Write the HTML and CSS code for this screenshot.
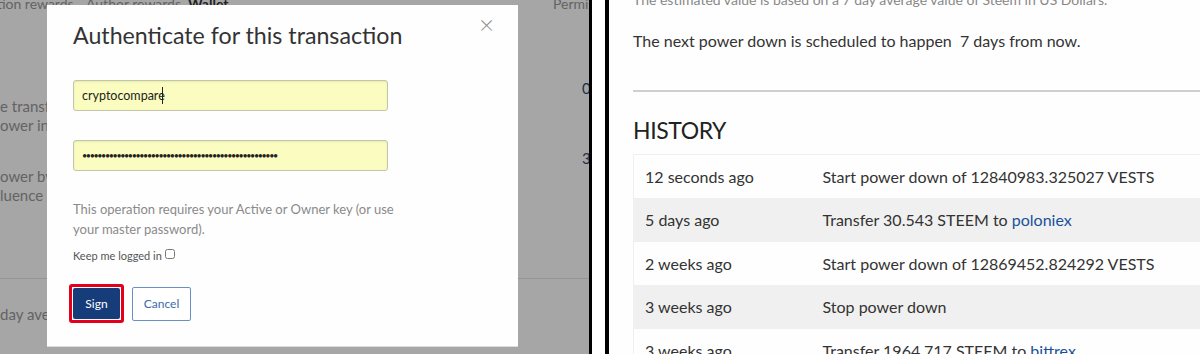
FILE: index.html
```html
<!DOCTYPE html>
<html lang="en">
<head>
    <meta charset="UTF-8">
    <meta name="viewport" content="width=device-width, initial-scale=1.0">
    <title>Wallet - Authenticate</title>
    <link rel="stylesheet" href="styles.css">
</head>
<body>
    <!-- Left shot: wallet page dimmed behind the login modal -->
    <div class="shot left">
        <div class="page">
            <div class="tabs">
                <span class="tab t1">Curation rewards</span>
                <span class="tab t2">Author rewards</span>
                <span class="tab t3 current">Wallet</span>
                <span class="tab">Permissions</span>
            </div>
            <div class="row first">
                <div class="desc">
                    <p>e transferred anywhere at anytime.</p>
                    <p>ower in a process called powering up.</p>
                </div>
                <div class="amount">0.000 STEEM</div>
            </div>
            <div class="row">
                <div class="desc">
                    <p>ower by holding it longer.</p>
                    <p>luence power and voting.</p>
                </div>
                <div class="amount">3.000 STEEM</div>
            </div>
            <div class="sep"></div>
            <p class="note">day average value of Steem in US Dollars.</p>
        </div>
        <div class="overlay"></div>

        <div class="modal">
            <span class="close">&times;</span>
            <h3>Authenticate for this transaction</h3>
            <form id="loginForm">
                <div class="field">
                    <input type="text" class="autofill" value="cryptocompare">
                    <span class="caret"></span>
                </div>
                <div class="field">
                    <input type="password" class="autofill" value="ooooooooooooooooooooooooooooooooooooooooooooooooooo">
                </div>
                <p class="hint">This operation requires your Active or Owner key (or use<br>your master password).</p>
                <label class="keep">Keep me logged in <input type="checkbox"></label>
                <div class="actions">
                    <span class="highlight"><button type="submit" class="btn primary">Sign</button></span>
                    <button type="button" class="btn hollow">Cancel</button>
                </div>
            </form>
        </div>
    </div>

    <div class="divider"><span></span></div>

    <!-- Right shot: history table -->
    <div class="shot right">
        <p class="estimate">The estimated value is based on a 7 day average value of Steem in US Dollars.</p>
        <p class="next">The next power down is scheduled to happen&nbsp; 7 days from now.</p>
        <hr>
        <h4>HISTORY</h4>
        <table class="history">
            <tr><td>12 seconds ago</td><td>Start power down of 12840983.325027 VESTS</td></tr>
            <tr><td>5 days ago</td><td>Transfer 30.543 STEEM to <a href="#">poloniex</a></td></tr>
            <tr><td>2 weeks ago</td><td>Start power down of 12869452.824292 VESTS</td></tr>
            <tr><td>3 weeks ago</td><td>Stop power down</td></tr>
            <tr><td>3 weeks ago</td><td>Transfer 1964.717 STEEM to <a href="#">bittrex</a></td></tr>
        </table>
    </div>
</body>
</html>
```

FILE: styles.css
```css
* { box-sizing: border-box; }
html, body { margin: 0; height: 354px; overflow: hidden; }
body { display: flex; font-family: Lato, "Open Sans", sans-serif; color: #333; background: #000; }

.shot { height: 354px; overflow: hidden; }
.left { width: 589px; flex-shrink: 0; position: relative; background: #fff; }
.right { flex: 1; background: #fefefe; padding-left: 24px; }

.divider { width: 20px; flex-shrink: 0; background: #000; padding: 0 3px; display: flex; }
.divider span { flex: 1; background: #fff; margin-right: 1px; }

/* dimmed page */
.page { color: #999; font-size: 15px; }
.tabs { display: flex; margin-top: -12px; height: 30px; align-items: center; white-space: nowrap; font-size: 14px; }
.tab { flex-shrink: 0; }
.t1 { margin-left: -32px; width: 118px; }
.t2 { width: 102px; }
.t3 { width: 365px; color: #333; font-weight: 700; }
.row { display: flex; justify-content: space-between; align-items: flex-start; white-space: nowrap; }
.row.first { margin-top: 60px; }
.row + .row { margin-top: 13px; }
.desc { padding-top: 19px; }
.desc p { margin: 0; line-height: 19px; }
.amount { width: 100px; margin-right: -93px; line-height: 20px; color: #2b4a78; flex-shrink: 0; }
.sep { border-top: 1px solid #e4e4e4; margin-top: 73px; }
.note { margin: 25px 0 0; line-height: 20px; white-space: nowrap; }
.overlay { position: absolute; inset: 0; background: rgba(0, 0, 0, 0.35); }

/* modal */
.modal { position: absolute; left: 47px; top: 5px; width: 471px; height: 342px; background: #fefefe; border-bottom: 1px solid #ddd; padding: 15px 26px; }
.modal h3 { margin: 0; font-weight: 400; font-size: 23.2px; line-height: 30px; color: #333; }
.close { position: absolute; right: 24px; top: 3px; font-size: 26px; color: #8a8a8a; font-weight: 300; }
.field { position: relative; width: 315px; margin-top: 30px; }
.field + .field { margin-top: 29px; }
input.autofill { width: 315px; height: 31px; background: #fafdbf; border: 1px solid #c4c4a8; border-radius: 3px; padding: 0 8px; font-family: inherit; font-size: 12.5px; color: #222; box-shadow: inset 0 1px 2px rgba(0, 0, 0, 0.08); }
input[type=password] { font-size: 9px; letter-spacing: -1.4px; }
.caret { position: absolute; left: 89px; top: 7px; width: 1px; height: 17px; background: #222; }
.hint { margin: 28px 0 0; font-size: 13px; line-height: 20px; color: #8a8a8a; white-space: nowrap; }
.keep { display: block; margin-top: 10px; font-size: 11px; color: #555; }
.keep input { margin: 0; width: 10px; height: 10px; vertical-align: 1px; }
.actions { display: flex; align-items: center; margin-top: 22px; margin-left: -4px; }
.highlight { border: 3px solid #e4001b; border-radius: 3px; padding: 1px; margin-right: 8px; display: flex; }
.btn { font-family: inherit; font-size: 12px; border-radius: 2px; cursor: pointer; }
.btn.primary { background: #163d7a; color: #fff; border: none; width: 47px; height: 31px; }
.btn.hollow { background: #fff; color: #3c6aa6; border: 1px solid #6a8fc4; width: 59px; height: 34px; }

/* right shot */
.estimate { margin: -10px 0 0; font-size: 14px; line-height: 20px; color: #888; white-space: nowrap; }
.next { margin: 21px 0 0; font-size: 16px; line-height: 20px; color: #333; }
hr { border: none; border-top: 2px solid #cfcfcf; margin: 39px 0 0; }
h4 { margin: 23px 0 0; font-weight: 400; font-size: 23px; letter-spacing: -0.4px; line-height: 30px; color: #222; }
.history { border-collapse: collapse; width: 100%; margin-top: 9px; border-top: 1px solid #efefef; border-left: 1px solid #efefef; }
.history td { height: 43.5px; padding: 0 11px; font-size: 16px; color: #333; white-space: nowrap; }
.history td:first-child { width: 178px; }
.history tr:nth-child(even) { background: #f0f0f0; }
.history a { color: #1a5099; text-decoration: none; }
```
